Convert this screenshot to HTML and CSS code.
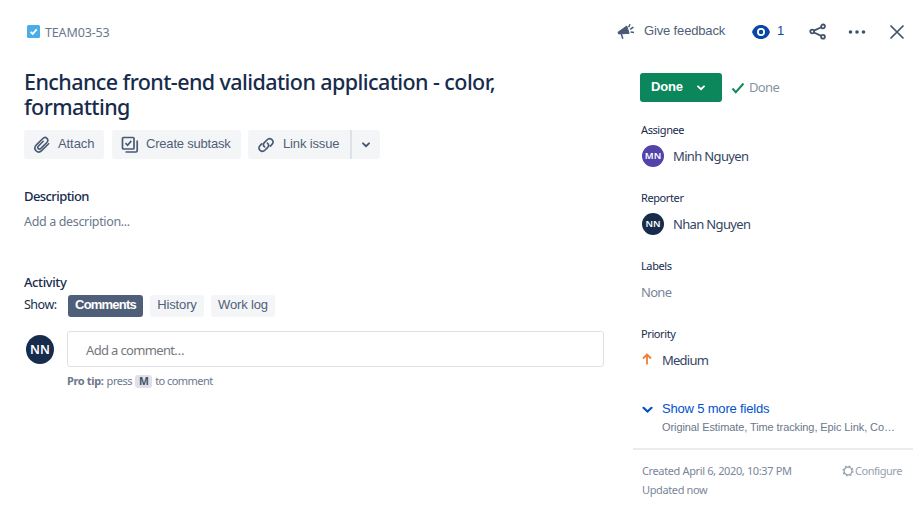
FILE: index.html
```html
<!DOCTYPE html>
<html lang="en">
<head>
<meta charset="utf-8">
<title>TEAM03-53</title>
<link rel="stylesheet" href="styles.css">
</head>
<body>
<div class="issue">
  <header class="topbar">
    <div class="crumb">
      <svg width="13" height="13" viewBox="0 0 13 13"><rect width="13" height="13" rx="1.5" fill="#4bade8"/><path d="M3.5 6.8l2.2 2.1 4-4.6" fill="none" stroke="#fff" stroke-width="1.8"/></svg>
      <span class="key">TEAM03-53</span>
    </div>
    <div class="tools">
      <svg class="horn" width="18" height="18" viewBox="0 0 18 18"><path d="M1 9.200L9.800 3l2.300 7.400L1.600 10.900z" fill="#4a5a75" stroke="#4a5a75" stroke-linejoin="round"/><path d="M4.300 11l1.500 4.800M11.700 4.200l1.300-2.900M13.100 6.400l3.300-2.300M13.600 9l3.400.4" fill="none" stroke="#4a5a75" stroke-width="1.500"/></svg>
      <span class="feedback ui">Give feedback</span>
      <svg class="eye" width="20" height="16" viewBox="0 0 20 16"><path d="M1 8C2.5 3.500 5.700.9 10 .9S17.500 3.500 19 8c-1.500 4.500-4.700 7.100-9 7.100S2.500 12.500 1 8z" fill="#0747a6"/><circle cx="10" cy="8" r="3.100" fill="none" stroke="#fff" stroke-width="1.800"/></svg>
      <span class="watch ui">1</span>
      <svg class="share" width="18" height="18" viewBox="0 0 18 18" fill="none" stroke="#42526e" stroke-width="1.800"><circle cx="3.200" cy="8.500" r="1.900"/><circle cx="14" cy="3.400" r="1.900"/><circle cx="14" cy="13.800" r="1.900"/><path d="M5 7.600l7.200-3.300M5 9.500l7.200 3.400"/></svg>
      <svg class="more" width="18" height="6" viewBox="0 0 18 6" fill="#42526e"><circle cx="2.500" cy="3" r="1.800"/><circle cx="9" cy="3" r="1.800"/><circle cx="15.500" cy="3" r="1.800"/></svg>
      <svg class="close" width="14" height="14" viewBox="0 0 14 14"><path d="M1 1l12 12M13 1L1 13" stroke="#42526e" stroke-width="1.700" stroke-linecap="round"/></svg>
    </div>
  </header>
  <div class="columns">
    <main class="main">
      <h1>Enchance front-end validation application - color,<br>formatting</h1>
      <div class="actions ui">
        <button class="action attach"><svg width="18" height="18" viewBox="0 0 18 18" fill="none" stroke="#4a5a75" stroke-width="1.600" stroke-linecap="round"><path d="M15.600 7.700l-6.700 6.700c-4.200 4.100-9.600-1.300-5.500-5.500l6.200-6.200c3.200-3.100 7.100.8 4 4L7.900 12.400c-2 1.900-4.300-.4-2.400-2.400l4.700-4.700"/></svg><span>Attach</span></button>
        <button class="action subtask"><svg width="18" height="18" viewBox="0 0 18 18" fill="none" stroke="#4a5a75" stroke-width="1.700"><rect x="1.500" y="1.500" width="11.500" height="11.500" rx="1"/><path d="M4.500 7.200l2.100 2.100 3.700-4.400M4.500 16H15q1.200 0 1.200-1.200V4.500"/></svg><span>Create subtask</span></button>
        <div class="split">
          <button class="action link"><svg width="18" height="18" viewBox="0 0 18 18" fill="none" stroke="#4a5a75" stroke-width="1.700" stroke-linecap="round"><path d="M7.600 10.900c-1.500-1.200-1.600-2.900-.3-4.200l2.600-2.700c3.400-3.200 8.200 1 5.200 4.300l-1.800 1.900M10.400 7.100c1.500 1.200 1.600 2.900.3 4.200L8.100 14c-3.400 3.200-8.200-1-5.200-4.300l1.800-1.900"/></svg><span>Link issue</span></button>
          <button class="action caret"><svg width="8" height="6" viewBox="0 0 8 6"><path d="M1 1.300l3 2.900 3-2.900" fill="none" stroke="#42526e" stroke-width="1.800" stroke-linecap="round"/></svg></button>
        </div>
      </div>
      <h2 class="desc-title">Description</h2>
      <p class="desc">Add a description...</p>
      <h2 class="act-title">Activity</h2>
      <div class="show">
        <span class="show-label">Show:</span>
        <button class="tab selected ui">Comments</button>
        <button class="tab history ui">History</button>
        <button class="tab worklog ui">Work log</button>
      </div>
      <div class="comment">
        <span class="avatar large">NN</span>
        <div class="comment-body">
          <div class="box"><span>Add a comment…</span></div>
          <p class="tip"><b>Pro tip:</b> <span class="press">press</span> <kbd>M</kbd> <span class="to">to comment</span></p>
        </div>
      </div>
    </main>
    <aside class="side">
      <div class="status">
        <button class="done ui"><span>Done</span><svg width="8" height="6" viewBox="0 0 8 6"><path d="M1 1.300l3 2.900 3-2.900" fill="none" stroke="#fff" stroke-width="1.800" stroke-linecap="round"/></svg></button>
        <svg class="tick" width="14" height="12" viewBox="0 0 14 12"><path d="M1.500 6.500l3.300 3.700L12.500 1.500" fill="none" stroke="#138a61" stroke-width="2"/></svg>
        <span class="resolution">Done</span>
      </div>
      <section class="field"><h3>Assignee</h3><div class="value"><span class="avatar purple">MN</span><span class="name">Minh Nguyen</span></div></section>
      <section class="field"><h3>Reporter</h3><div class="value"><span class="avatar">NN</span><span class="name">Nhan Nguyen</span></div></section>
      <section class="field"><h3>Labels</h3><div class="value"><span class="none">None</span></div></section>
      <section class="field"><h3>Priority</h3><div class="value"><svg class="arrow" width="10" height="12" viewBox="0 0 10 12"><path d="M5 11.500V1.500M1 5.500l4-4 4 4" fill="none" stroke="#f07f33" stroke-width="1.800"/></svg><span class="medium">Medium</span></div></section>
      <div class="more-fields ui">
        <svg width="11" height="8" viewBox="0 0 11 8"><path d="M1.500 1.800l4 3.700 4-3.700" fill="none" stroke="#0052cc" stroke-width="2.200" stroke-linecap="round"/></svg>
        <div><div class="show-more">Show 5 more fields</div><div class="sub">Original Estimate, Time tracking, Epic Link, Co…</div></div>
      </div>
      <footer class="meta">
        <div><p class="created">Created April 6, 2020, 10:37 PM</p><p class="updated">Updated now</p></div>
        <div class="configure"><svg width="12" height="12" viewBox="0 0 12 12" fill="none" stroke="#97a0af"><circle cx="6" cy="6" r="3.900" stroke-width="1.300"/><circle cx="6" cy="6" r="5" stroke-width="1.200" stroke-dasharray="1.960 1.967"/></svg><span>Configure</span></div>
      </footer>
    </aside>
  </div>
</div>
</body>
</html>
```
FILE: styles.css
```css
* { box-sizing: border-box; }
body { margin: 0; background: #fff; color: #172b4d; font: 13px/20px "Noto Sans", sans-serif; }
h1, h2, h3, p { margin: 0; }
svg { display: block; flex: none; }
span, button, p, h1, h2, h3, .sub { white-space: nowrap; }
button { border: 0; padding: 0; font: inherit; color: inherit; letter-spacing: inherit; }
.ui, button.ui { font-family: "Liberation Sans", sans-serif; }
.issue { width: 923px; height: 522px; overflow: hidden; }
.topbar { display: flex; justify-content: space-between; height: 70px; padding: 22px 19px 0 27px; }
.crumb, .tools { display: flex; align-items: center; height: 20px; }
.crumb svg { margin-top: -1px; }
.key { margin: 2px 0 0 5px; color: #6b778c; font-size: 12.5px; letter-spacing: -.15px; }
.feedback { width: 82px; margin: -3px 25px 0 9px; color: #505f79; font-size: 13px; letter-spacing: -.15px; }
.watch { width: 8px; margin: -3px 24px 0 6px; color: #0747a6; font-size: 13px; }
.more { margin: 0 24px 0 21px; }
.columns { display: grid; grid-template-columns: 580px 280px; column-gap: 29px; padding-left: 24px; }
h1 { height: 61px; margin-top: -1px; font-size: 21.5px; line-height: 25px; font-weight: 500; letter-spacing: -.58px; }
.actions { display: flex; gap: 8px; color: #505f79; font-size: 13px; }
.action { display: flex; align-items: center; gap: 7px; height: 29px; padding-left: 9px; border-radius: 3px; background: #f4f5f7; letter-spacing: -.08px; }
.action span { margin-top: -1px; }
.attach { width: 80px; }
.subtask { width: 129px; letter-spacing: -.2px; }
.split { display: flex; margin-left: -1px; }
.link { width: 102px; border-radius: 3px 0 0 3px; letter-spacing: -.15px; }
.link svg { margin-right: 1px; }
.caret { width: 30px; padding: 1px 0 0 10px; border-left: 2px solid #dfe1e6; border-radius: 0 3px 3px 0; }
h2 { font-size: 13px; line-height: 20px; font-weight: 500; }
.desc-title { margin-top: 27px; letter-spacing: -.58px; }
.desc { margin-top: 6px; color: #6b778c; font-size: 12.5px; letter-spacing: -.35px; }
.act-title { margin-top: 40px; letter-spacing: -.4px; }
.show { display: flex; margin-top: 3px; height: 22px; }
.show-label { width: 44px; font-size: 12.5px; letter-spacing: -.5px; }
.tab { height: 22px; border-radius: 3px; background: #f4f5f7; color: #505f79; font-size: 13px; line-height: 20px; padding-bottom: 2px; letter-spacing: -.15px; }
.selected { width: 75px; background: #505f79; color: #fff; font-weight: 700; letter-spacing: -.8px; }
.history { width: 54px; margin: 0 7px; }
.worklog { width: 64px; }
.comment { display: flex; margin-top: 14px; }
.avatar { display: flex; align-items: center; justify-content: center; width: 22px; height: 22px; border-radius: 50%; background: #172b4d; color: #fff; font-size: 9.5px; font-weight: 600; }
.value .avatar { margin-top: -1px; }
.large { width: 28px; height: 29px; margin: 4px 13px 0 2px; font-size: 12.5px; }
.purple { background: #5243aa; }
.box { width: 537px; height: 36px; border: 1px solid #dfe1e6; border-radius: 3px; padding: 8px 18px; color: #75777d; font-size: 13px; letter-spacing: -.65px; }
.tip { display: flex; align-items: center; height: 20px; margin-top: 4px; color: #6b778c; font-size: 11px; letter-spacing: -.35px; }
.press { margin-left: 3px; letter-spacing: -.45px; }
.to { letter-spacing: -.55px; }
kbd { width: 17px; height: 13px; margin: 0 3px; border-radius: 3px; background: #dfe1e6; color: #42526e; text-align: center; font: 700 10.5px/13px "Noto Sans", sans-serif; }
.side { padding: 3px 0 0 7px; }
.status { display: flex; align-items: center; height: 29px; }
.done { display: flex; align-items: center; width: 82px; height: 29px; padding-left: 11px; border-radius: 3px; background: #0b875b; color: #fff; font-size: 13px; font-weight: 700; text-align: left; letter-spacing: -.2px; }
.done span { width: 46px; margin-top: -1px; }
.tick { margin: 0 4px 0 9px; }
.resolution { margin-top: -1px; color: #8993a4; font-size: 13px; letter-spacing: -.65px; }
.field { height: 68px; }
.status + .field { margin-top: 20px; }
h3 { height: 16px; padding-left: 1px; font-size: 11px; line-height: 16px; font-weight: 400; letter-spacing: -.4px; }
.value { display: flex; align-items: center; height: 24px; margin-top: 6px; padding-left: 2px; color: #344563; }
.name { margin: 0 0 0 9px; font-size: 13px; letter-spacing: -.65px; }
.none { margin: 0 0 0 -1px; color: #7a869a; font-size: 13px; letter-spacing: -.7px; }
.arrow { margin-top: -2px; }
.medium { margin: 0 0 0 10px; font-size: 13px; letter-spacing: -.75px; }
.more-fields { display: flex; gap: 9px; padding-left: 2px; margin-top: 5px; }
.more-fields svg { margin-top: 7px; }
.show-more { color: #0052cc; font-size: 13px; line-height: 20px; letter-spacing: -.18px; }
.sub { margin-top: -1px; color: #6b778c; font-size: 11px; line-height: 18px; letter-spacing: -.09px; }
.meta { display: flex; justify-content: space-between; margin: 12px 0 0 -7px; padding: 11px 11px 0 9px; border-top: 2px solid #ebecf0; color: #7a869a; font-size: 11px; line-height: 19px; letter-spacing: -.37px; }
.configure { display: flex; align-items: center; gap: 1px; height: 19px; color: #97a0af; letter-spacing: -.45px; }
```
